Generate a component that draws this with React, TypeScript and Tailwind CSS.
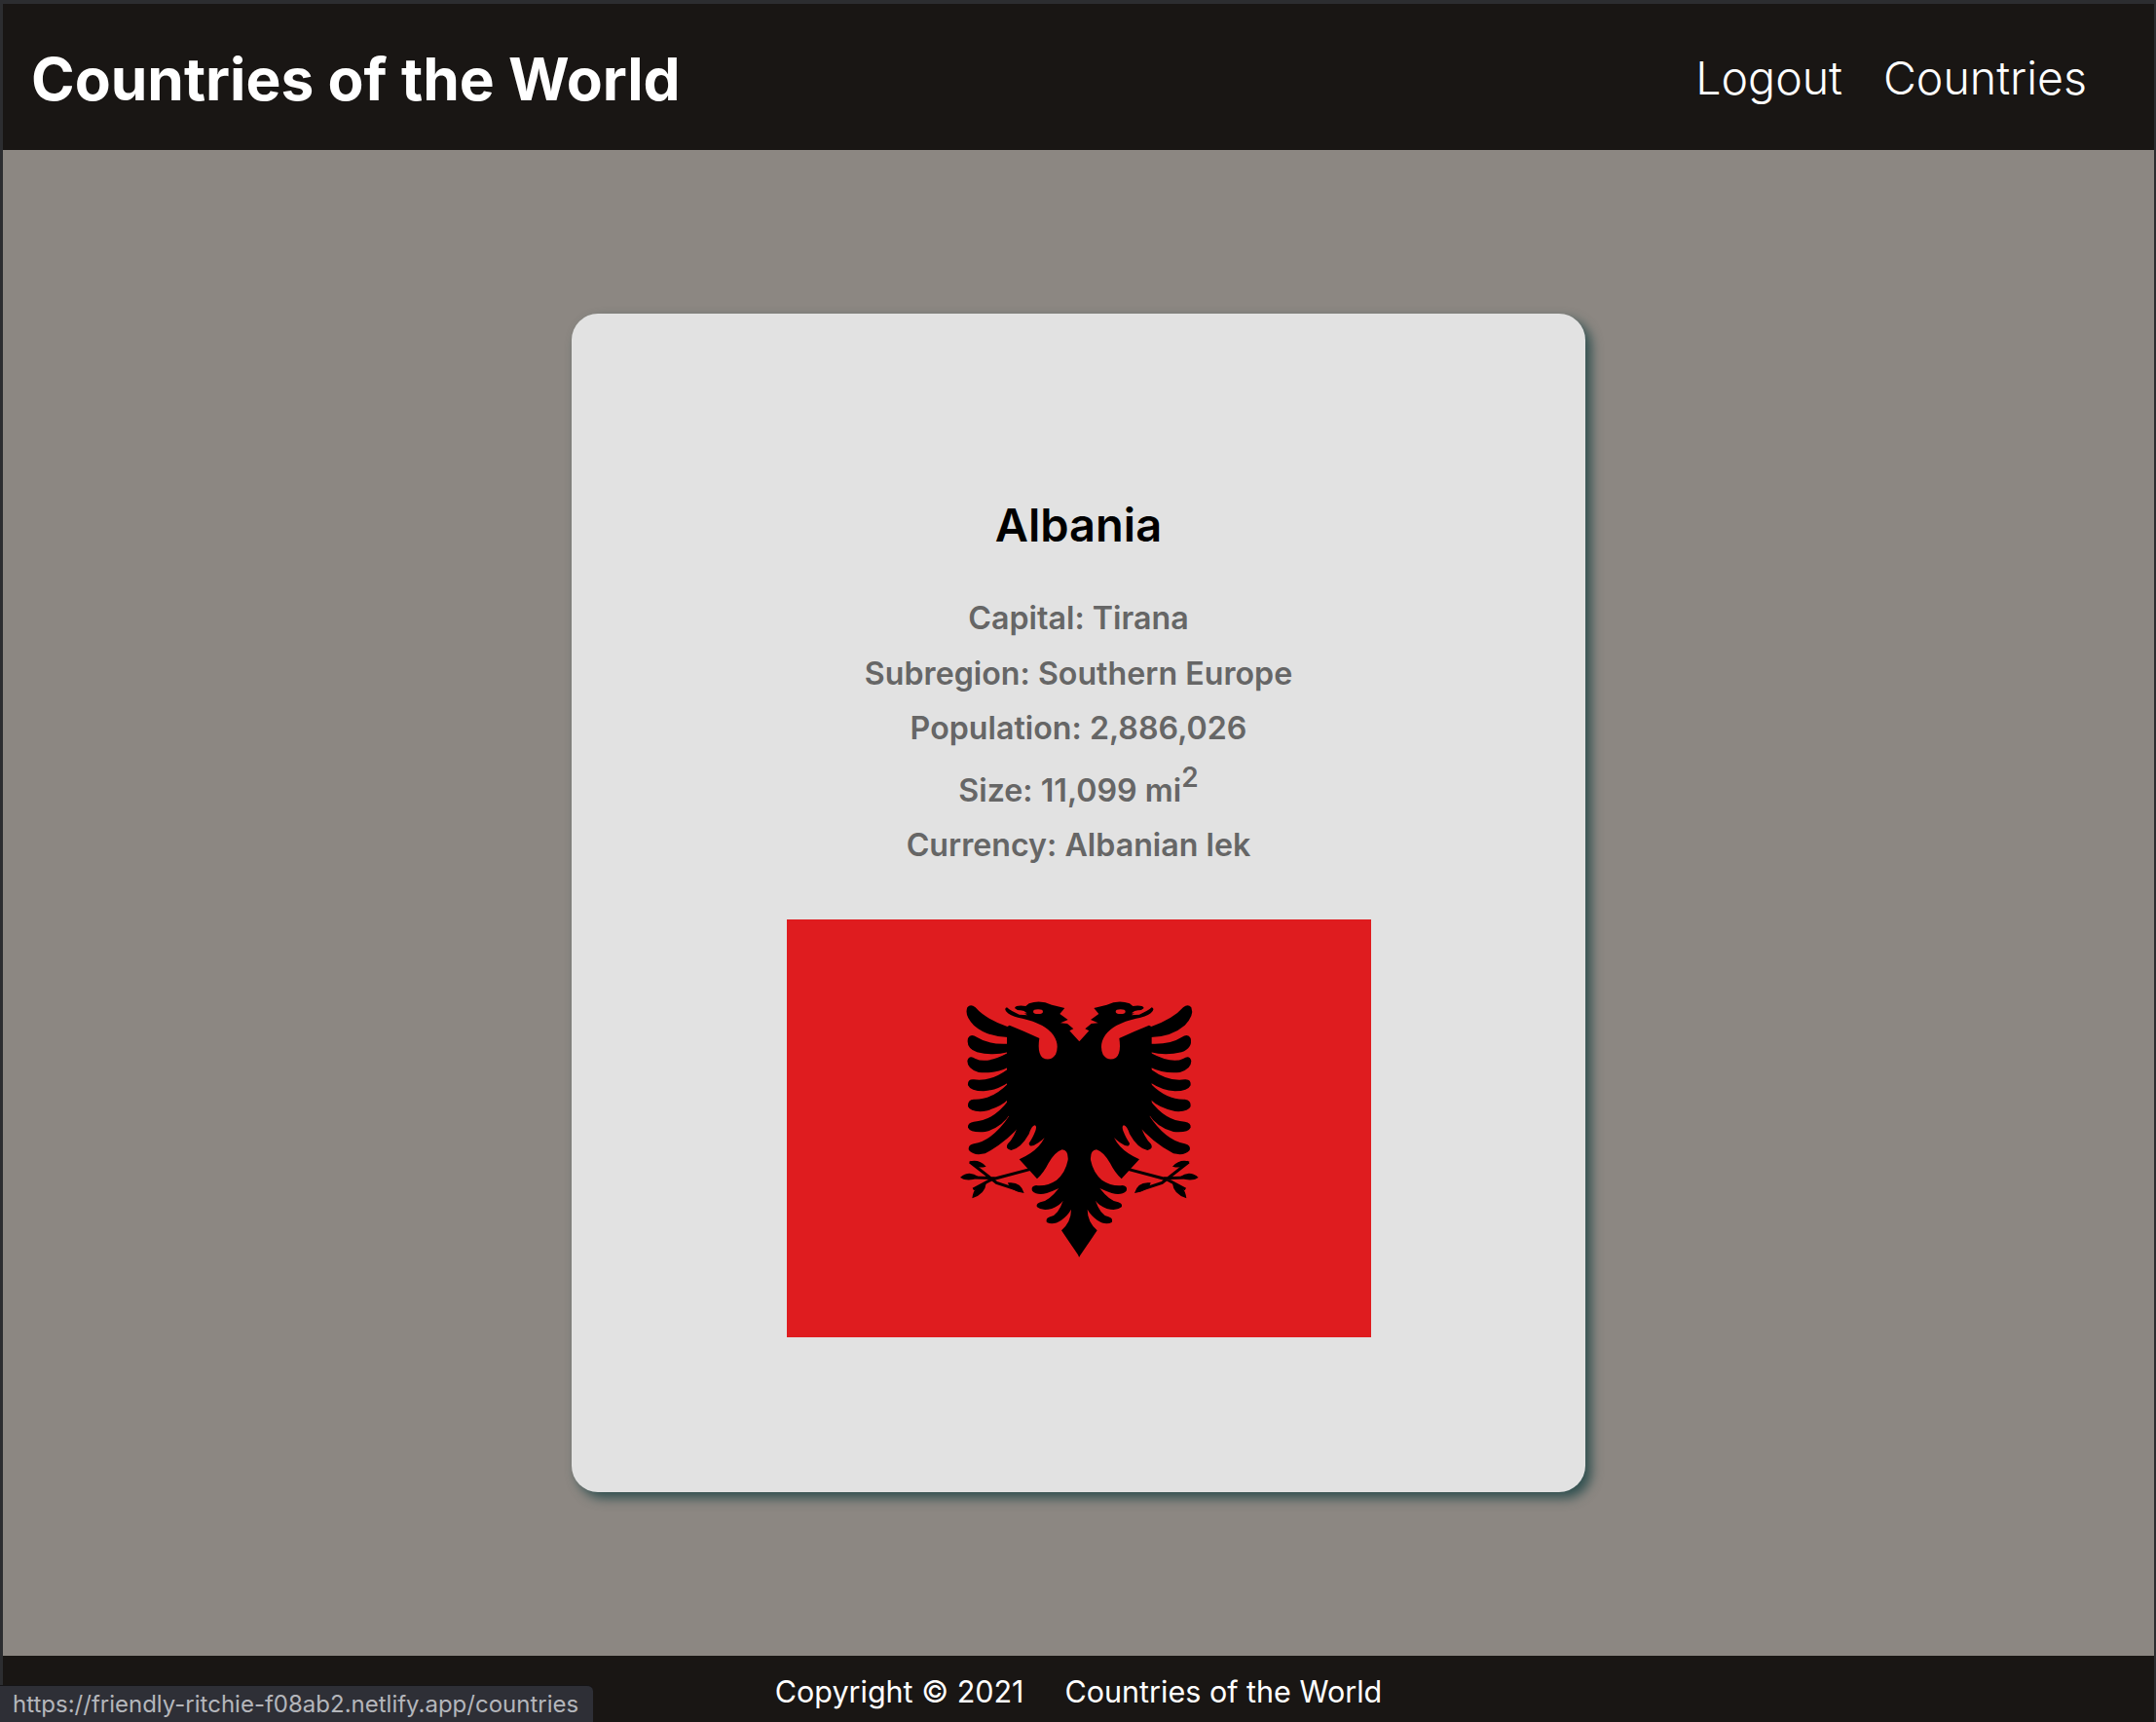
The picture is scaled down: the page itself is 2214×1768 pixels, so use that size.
const FONT = "font-['Inter','Liberation_Sans',sans-serif]";

// half of the eagle, mirrored around x=505 for the other side
function EagleHalf() {
  return (
    <g>
      <path d="M507 205 L505 205 L475 172 L487 166 L468 150 L447 148 L470 138 L445 120 L460 102 L420 92 Q385 76 350 88 L340 96 Q310 92 306 102 Q312 108 322 110 L345 124 L320 122 Q295 112 282 100 Q270 104 285 118 Q300 130 330 134 Q400 150 425 185 Q445 215 432 245 Q415 268 392 255 Q375 240 382 195 Q340 175 290 155 L282 160 L282 430 L295 440 L328 458 Q320 450 315 465 Q305 500 285 520 Q275 535 295 540 Q325 535 350 490 Q358 465 368 463 Q375 465 370 480 Q360 505 350 518 Q350 530 365 525 Q395 510 415 480 Q412 470 405 478 Q395 535 320 568 L375 628 Q395 610 410 580 Q430 545 452 538 Q472 540 470 570 Q462 610 435 632 Q405 652 372 648 Q355 650 360 665 Q375 680 405 672 Q425 665 442 657 Q410 698 385 700 Q370 705 375 715 Q390 728 420 720 Q445 710 455 695 Q440 740 415 745 Q400 750 405 762 Q425 772 450 755 Q470 740 480 722 Q480 760 450 787 L505 868 L507 868 Z" fill="#000" />
      <path d="M285 160 Q215 135 185 100 Q170 88 160 100 Q150 125 180 155 Q220 190 285 192 Z" fill="#000" />
      <path d="M285 212 Q225 215 190 192 Q170 178 162 195 Q155 225 190 238 Q240 250 285 238 Z" fill="#000" />
      <path d="M285 240 Q220 275 185 258 Q165 245 160 265 Q160 290 195 300 Q245 305 285 285 Z" fill="#000" />
      <path d="M285 290 Q230 330 180 322 Q160 320 162 340 Q170 358 210 358 Q250 355 285 332 Z" fill="#000" />
      <path d="M285 335 Q235 385 180 383 Q160 385 162 405 Q170 423 210 420 Q260 410 288 382 Z" fill="#000" />
      <path d="M288 385 Q240 450 180 452 Q160 455 162 470 Q170 487 215 483 Q265 470 292 428 Z" fill="#000" />
      <path d="M292 430 Q240 510 180 520 Q160 525 165 540 Q180 558 215 550 Q280 515 328 458 L300 420 Z" fill="#000" />
      <ellipse cx="378" cy="113" rx="15" ry="7" fill="#df1c1f" />
      <path d="M310 112 Q330 104 344 118 L322 121 Z" fill="#df1c1f" />
      {/* twigs under the claw */}
      <path d="M355 598 L235 630 L178 660 M168 576 L250 640 L325 665 M145 623 L245 626" stroke="#000" strokeWidth="9" fill="none" />
      <path d="M138 624 Q165 600 195 622 Q165 640 138 624 Z M165 575 Q195 565 218 590 Q185 600 165 575 Z M175 688 Q180 645 218 642 Q215 675 175 688 Z M335 672 Q290 665 285 640 Q325 635 335 672 Z" fill="#000" />
    </g>
  );
}

function AlbaniaFlag() {
  return (
    <div className="w-[600px] h-[429px] bg-[#df1c1f] flex items-center justify-center mt-[47px]">
      <svg width="340" height="320" viewBox="0 0 1020 960" className="mt-[5px] ml-[4px]">
        <EagleHalf />
        <g transform="translate(1010 0) scale(-1 1)">
          <EagleHalf />
        </g>
      </svg>
    </div>
  );
}

export default function App() {
  return (
    <div className={`${FONT} relative h-[1768px] w-[2214px] overflow-hidden flex flex-col bg-[#2c2d30] pt-[4px] pl-[3px] pr-[2px]`}>
      <header className="h-[150px] shrink-0 bg-[#191614] flex items-center justify-between pl-[29px] pr-[69px]">
        <h1 className="text-[60.4px] font-bold text-white mt-[4px]">Countries of the World</h1>
        <nav className="flex gap-[42px] text-[46.5px] font-light text-white mt-[3px]">
          <a href="#">Logout</a>
          <a href="#">Countries</a>
        </nav>
      </header>

      <main className="flex-1 bg-[#8c8782] flex items-center justify-center">
        <div className="w-[1041px] h-[1210px] rounded-[27px] bg-[#e2e2e2] shadow-[6px_6px_12px_#2f4f4f] flex flex-col items-center pt-[187px]">
          <h2 className="text-[47px] leading-[60px] font-semibold text-black">Albania</h2>
          <div className="mt-[38px] text-[32.2px] leading-[56.5px] font-semibold text-[#666666] text-center">
            <p>Capital: Tirana</p>
            <p>Subregion: Southern Europe</p>
            <p>Population: 2,886,026</p>
            <p className="pt-[7px]">
              Size: 11,099 mi<sup className="text-[28px] align-super top-[-3px]">2</sup>
            </p>
            <p>Currency: Albanian lek</p>
          </div>
          <AlbaniaFlag />
        </div>
      </main>

      <footer className="h-[68px] shrink-0 bg-[#191614] flex items-center justify-center gap-[42px] text-[30.5px] text-white">
        <span className="mt-[6px]">Copyright © 2021</span>
        <span className="mt-[6px]">Countries of the World</span>
      </footer>

      {/* link preview bubble */}
      <div className="absolute left-0 bottom-0 h-[38px] w-[609px] bg-[#2e2f36] rounded-tr-[6px] border-t border-[#141416] flex items-center pl-[13px] text-[24px] text-[#b4b6bb] whitespace-nowrap">
        https://friendly-ritchie-f08ab2.netlify.app/countries
      </div>
    </div>
  );
}
